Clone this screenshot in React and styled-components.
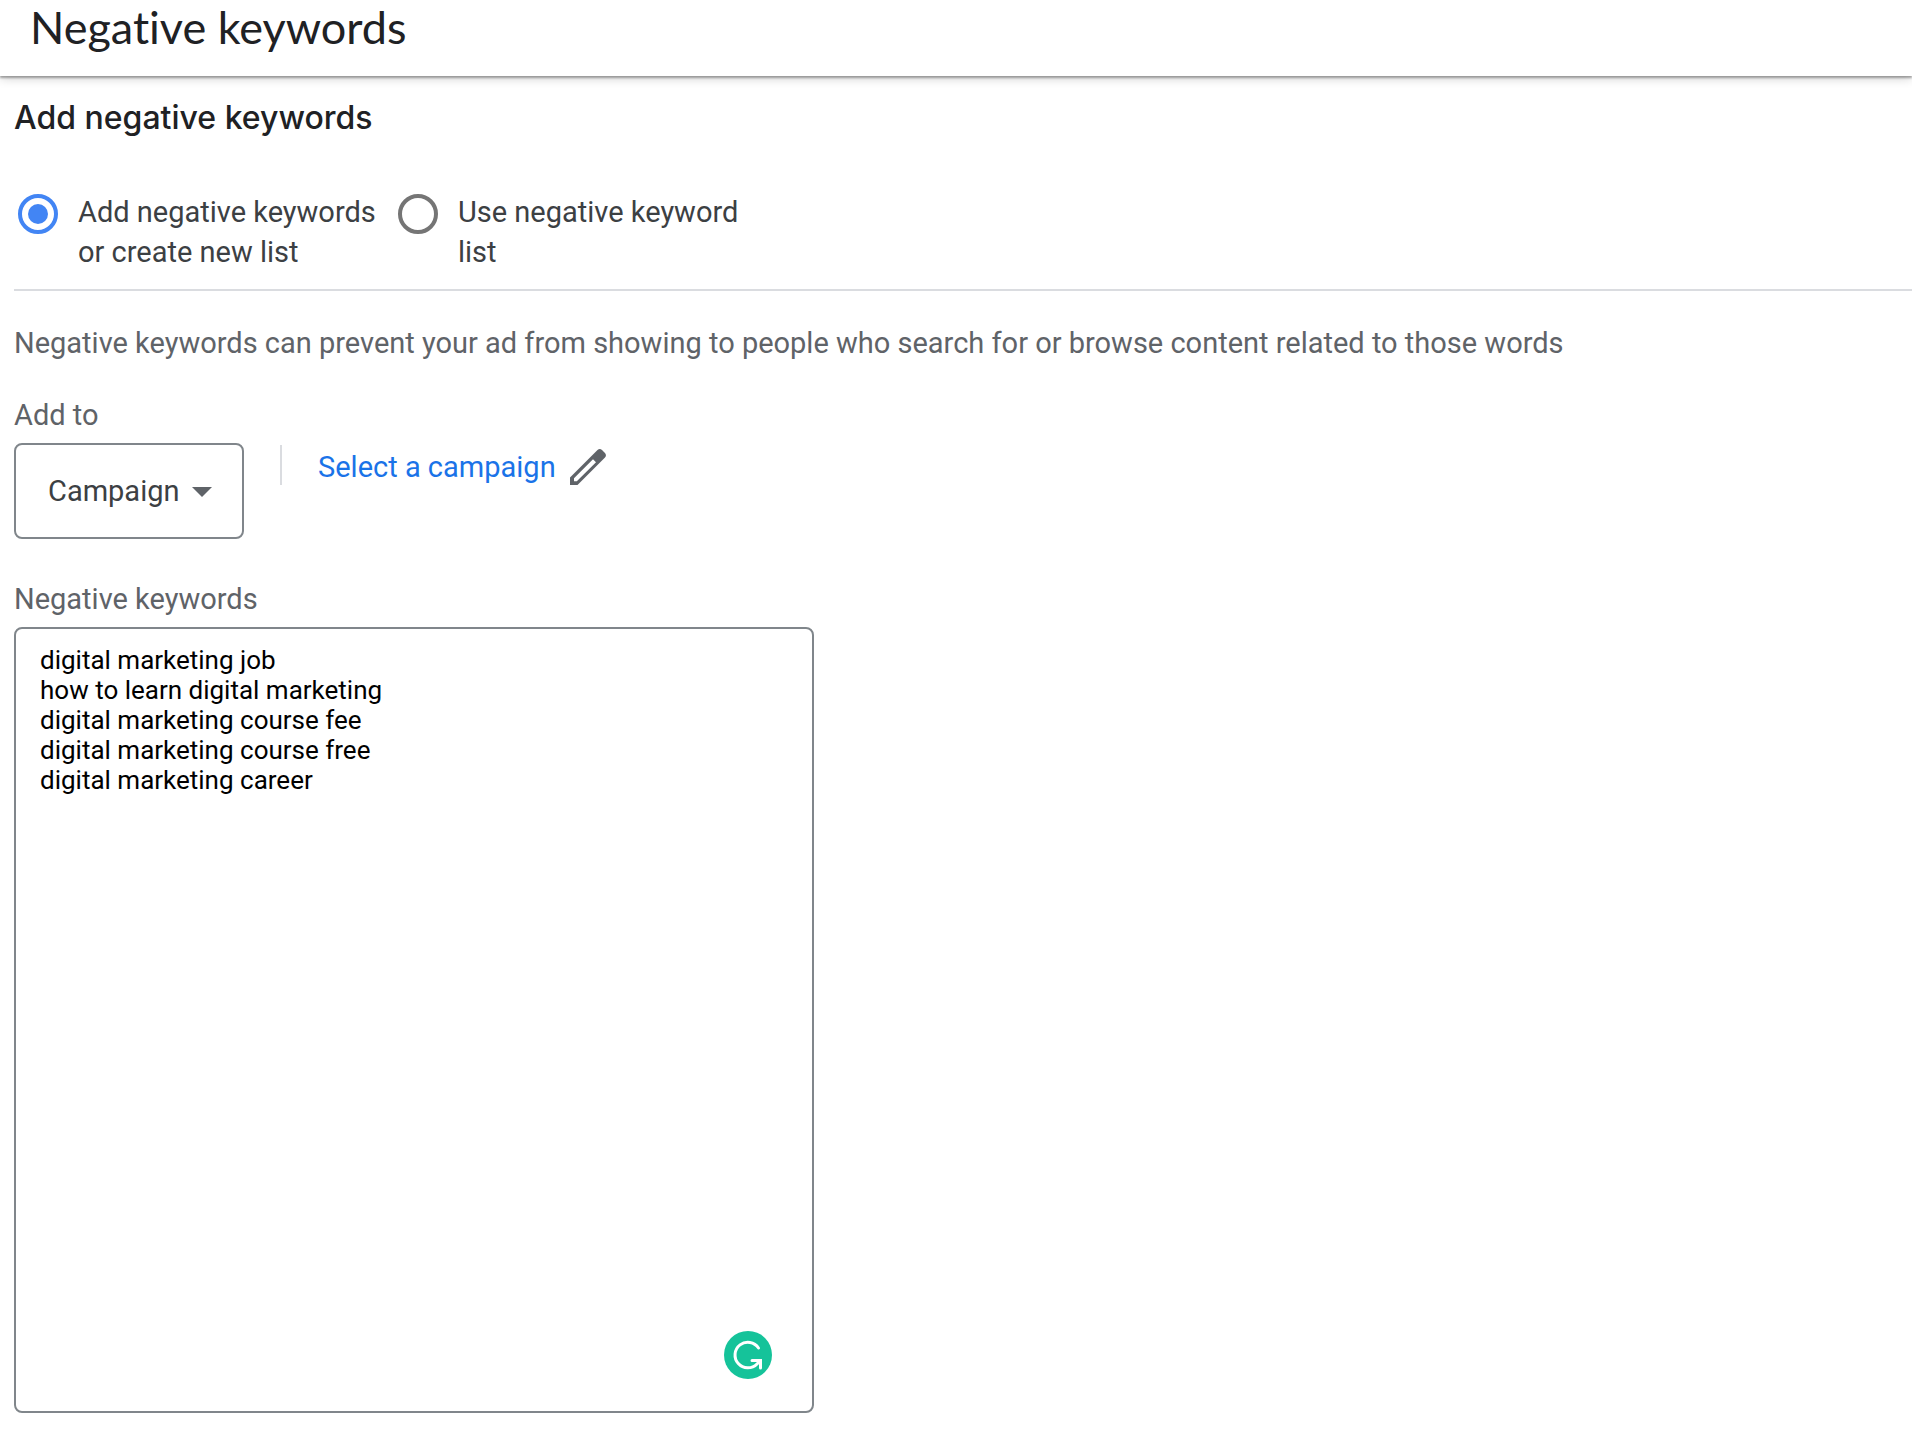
import { useState } from 'react';
import styled, { createGlobalStyle } from 'styled-components';

const keywords = [
    'digital marketing job',
    'how to learn digital marketing',
    'digital marketing course fee',
    'digital marketing course free',
    'digital marketing career',
];

const sources = [
    { value: 'new', text: 'Add negative keywords or create new list' },
    { value: 'list', text: 'Use negative keyword list' },
];

function PencilIcon() {
    return (
        <svg width="36" height="36" viewBox="0 0 36 36" aria-hidden="true">
            <path
                fill="#5f6368"
                fillRule="evenodd"
                d="M0 28.5V36h7.500L35 8.500a3.500 3.500 0 0 0 0-4.500L32 1a3.500 3.500 0 0 0-4.500 0zM4 29.200 23 10.200l3 3L6.800 32.200H4z"
            />
        </svg>
    );
}

function GrammarIcon() {
    return (
        <svg width="48" height="48" viewBox="0 0 48 48" aria-hidden="true">
            <circle cx="24" cy="24" r="24" fill="#15c39a" />
            <g fill="none" stroke="#fff" strokeWidth="3" strokeLinecap="round">
                <path d="M34.500 17A12.800 12.800 0 1 0 33 33l3-3" />
                <path d="M28 29.500h8.500V37" />
            </g>
        </svg>
    );
}

function App() {
    const [source, setSource] = useState('new');
    const [text, setText] = useState(keywords.join('\n'));

    return (
        <>
            <GlobalStyle />
            <Header>
                <Title>Negative keywords</Title>
            </Header>
            <Main>
                <SubTitle>Add negative keywords</SubTitle>
                <RadioGroup role="radiogroup" aria-label="Add negative keywords">
                    {sources.map(item => (
                        <RadioLabel key={item.value}>
                            <Radio
                                type="radio"
                                name="source"
                                checked={source === item.value}
                                onChange={() => setSource(item.value)}
                            />
                            <span>{item.text}</span>
                        </RadioLabel>
                    ))}
                </RadioGroup>

                <Description>
                    Negative keywords can prevent your ad from showing to people who search for or browse content related to those words
                </Description>

                <Label htmlFor="level">Add to</Label>
                <LevelRow>
                    <SelectWrapper>
                        <Select id="level" defaultValue="Campaign">
                            <option>Campaign</option>
                        </Select>
                        <Arrow width="20" height="10" viewBox="0 0 20 10" aria-hidden="true">
                            <path d="M0 0h20L10 10z" fill="#5f6368" />
                        </Arrow>
                    </SelectWrapper>
                    <Separator />
                    <CampaignButton type="button">
                        Select a campaign
                        <PencilIcon />
                    </CampaignButton>
                </LevelRow>

                <Label htmlFor="keywords">Negative keywords</Label>
                <KeywordsWrapper>
                    <Keywords
                        id="keywords"
                        spellCheck="false"
                        value={text}
                        onChange={e => setText(e.target.value)}
                    />
                    <Badge type="button" aria-label="Check grammar">
                        <GrammarIcon />
                    </Badge>
                </KeywordsWrapper>
            </Main>
        </>
    );
}

export default App

const GlobalStyle = createGlobalStyle`
    * {
        box-sizing: border-box;
    }

    body {
        margin: 0;
        background-color: #fff;
        color: #3c4043;
        font: 29px/40px Roboto, sans-serif;
    }
`

const Header = styled.header`
    height: 76px;
    padding: 0 30px;
    box-shadow: 0 2px 2px rgba(0, 0, 0, 0.32), 0 2px 10px rgba(0, 0, 0, 0.2);
`

const Title = styled.h1`
    margin: 0;
    color: #202124;
    font: 400 45px/54px Lato, sans-serif;
    font-variant-ligatures: none;
`

const Main = styled.main`
    padding: 22px 0 32px 14px;
`

const SubTitle = styled.h2`
    margin: 0 0 54px;
    color: #202124;
    font: 500 32px/40px Inter, sans-serif;
`

const RadioGroup = styled.div`
    display: flex;
    gap: 12px;
    padding-bottom: 17px;
    border-bottom: 2px solid #dadce0;
`

const RadioLabel = styled.label`
    display: flex;
    align-items: flex-start;
    gap: 20px;
    width: 368px;
    padding-left: 4px;
    cursor: pointer;
`

const Radio = styled.input`
    appearance: none;
    flex: none;
    width: 40px;
    height: 40px;
    margin: 2px 0 0;
    border: 4px solid #757575;
    border-radius: 50%;
    background-color: #fff;

    &:checked {
        padding: 6px;
        border-color: #4285f4;
        background: #4285f4 content-box;
    }
`

const Description = styled.p`
    margin: 32px 0;
    color: #5f6368;
`

const Label = styled.label`
    display: block;
    margin-bottom: 8px;
    color: #5f6368;
`

const LevelRow = styled.div`
    display: flex;
    align-items: flex-start;
    margin-bottom: 40px;
`

const SelectWrapper = styled.div`
    position: relative;
`

const Select = styled.select`
    appearance: none;
    width: 230px;
    height: 96px;
    padding: 0 60px 0 32px;
    border: 2px solid #80868b;
    border-radius: 8px;
    background-color: #fff;
    color: #3c4043;
    font: inherit;
`

const Arrow = styled.svg`
    position: absolute;
    top: 44px;
    right: 32px;
    pointer-events: none;
`

const Separator = styled.div`
    width: 2px;
    height: 40px;
    margin: 2px 36px 0;
    background-color: #dadce0;
`

const CampaignButton = styled.button`
    display: flex;
    align-items: center;
    gap: 14px;
    margin: 4px 0 0;
    padding: 0;
    border: 0;
    background: none;
    color: #1a73e8;
    font: inherit;
    cursor: pointer;
`

const KeywordsWrapper = styled.div`
    position: relative;
    width: 100%;
    max-width: 800px;
`

const Keywords = styled.textarea`
    display: block;
    width: 100%;
    height: 786px;
    padding: 16px 24px;
    border: 2px solid #80868b;
    border-radius: 8px;
    outline: 0;
    color: #000;
    font: 26px/30px Roboto, sans-serif;
    resize: none;
`

const Badge = styled.button`
    position: absolute;
    right: 42px;
    bottom: 34px;
    padding: 0;
    border: 0;
    border-radius: 50%;
    background: none;
    line-height: 0;
    cursor: pointer;
`
